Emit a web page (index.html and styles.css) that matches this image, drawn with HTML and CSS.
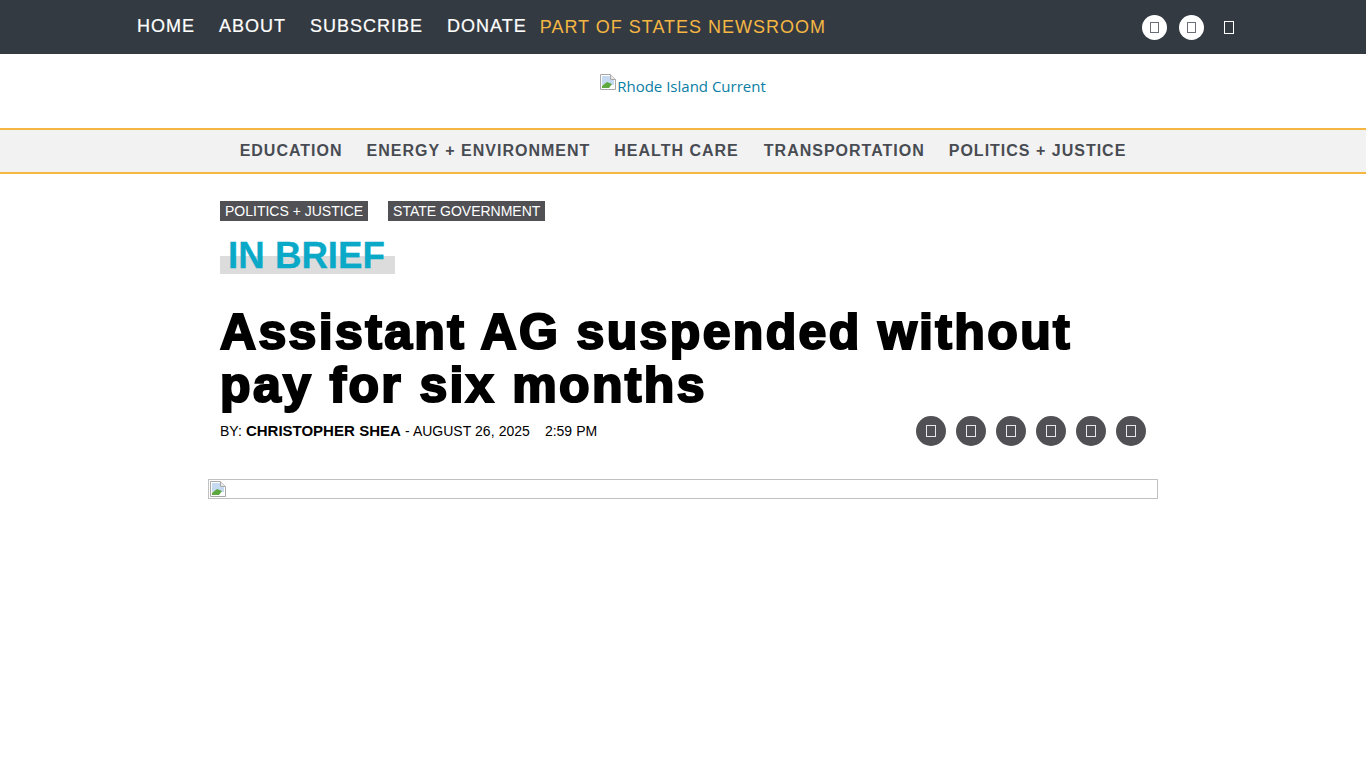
FILE: index.html
```html
<!DOCTYPE html>
<html lang="en">
<head>
<meta charset="utf-8">
<title>Assistant AG suspended without pay for six months</title>
<link rel="stylesheet" href="styles.css">
</head>
<body>
<header class="topbar">
  <nav class="topnav">
    <a>HOME</a><a>ABOUT</a><a>SUBSCRIBE</a><a>DONATE</a>
  </nav>
  <span class="states">PART OF STATES NEWSROOM</span>
  <div class="topicons">
    <span class="circle-white"><span class="tofu-dark"></span></span>
    <span class="circle-white"><span class="tofu-dark"></span></span>
    <span class="search"><span class="tofu-white"></span></span>
  </div>
</header>
<div class="logo">
  <a class="logo-link"><svg class="broken" width="16" height="16" viewBox="0 0 16 16"><path d="M0.5 0.5H10.5L15.5 5.5V15.5H0.5Z" fill="#fff" stroke="#a8a8a8"/><path d="M10.5 0.5V5.5H15.5" fill="#e8e8e8" stroke="#a8a8a8"/><path d="M2 2H10V6H14V11H2Z" fill="#c5d9f1"/><path d="M2 14V12L7 8L12 10L9 14Z" fill="#5da83f"/></svg>Rhode Island Current</a>
</div>
<nav class="mainnav">
  <a>EDUCATION</a><a>ENERGY + ENVIRONMENT</a><a class="health">HEALTH CARE</a><a>TRANSPORTATION</a><a>POLITICS + JUSTICE</a>
</nav>
<main class="article">
  <div class="tags"><span>POLITICS + JUSTICE</span><span>STATE GOVERNMENT</span></div>
  <div class="brief"><span>IN BRIEF</span></div>
  <h1>Assistant AG suspended without pay for six months</h1>
  <div class="meta">
    <p class="byline">BY: <b>CHRISTOPHER SHEA</b> - AUGUST 26, 2025 <span class="time">2:59 PM</span></p>
    <div class="share">
      <span><i></i></span><span><i></i></span><span><i></i></span><span><i></i></span><span><i></i></span><span><i></i></span>
    </div>
  </div>
  <div class="hero"><svg width="16" height="16" viewBox="0 0 16 16"><path d="M0.5 0.5H10.5L15.5 5.5V15.5H0.5Z" fill="#fff" stroke="#a8a8a8"/><path d="M10.5 0.5V5.5H15.5" fill="#e8e8e8" stroke="#a8a8a8"/><path d="M2 2H10V6H14V11H2Z" fill="#c5d9f1"/><path d="M2 14V12L7 8L12 10L9 14Z" fill="#5da83f"/></svg></div>
</main>
</body>
</html>
```
FILE: styles.css
```css
* { box-sizing: border-box; }
html, body { margin: 0; padding: 0; background: #fff; }
body { font-family: "Liberation Sans", Arial, sans-serif; min-height: 768px; overflow: hidden; }
.topbar { height: 54px; background: #343a42; display: flex; align-items: center; padding-left: 137px; padding-right: 125px; }
.topnav { display: flex; gap: 24px; padding-bottom: 2px; }
.topnav a { color: #fff; font-size: 18px; letter-spacing: 1px; -webkit-text-stroke: 0.2px #fff; }
.states { margin-left: 13px; color: #f5b642; font-size: 18px; letter-spacing: 1px; }
.topicons { margin-left: auto; display: flex; align-items: center; gap: 12px; }
.circle-white { width: 25px; height: 25px; border-radius: 50%; background: #fff; display: flex; align-items: center; justify-content: center; }
.tofu-dark { width: 9px; height: 11px; border: 1px solid #6a6e74; }
.search { width: 25px; height: 25px; display: flex; align-items: center; justify-content: center; }
.tofu-white { width: 10px; height: 13px; border: 1px solid #fff; }
.logo { height: 74px; display: flex; justify-content: center; padding-top: 20px; }
.logo-link { font-family: "Open Sans", sans-serif; color: #0a7ea4; font-size: 15px; line-height: 24px; height: 24px; }
.broken { vertical-align: 2px; margin-right: 1px; }
.mainnav { height: 46px; background: #f2f2f2; border-top: 2px solid #f5b642; border-bottom: 2px solid #f5b642; display: flex; justify-content: center; align-items: center; gap: 24px; }
.mainnav a { color: #484c52; font-size: 16px; font-weight: 700; letter-spacing: 1px; }
.mainnav .health { margin-right: 1px; }
.article { width: 950px; margin-left: 208px; }
.tags { display: flex; gap: 20px; padding: 27px 0 0 12px; }
.tags span { background: #505055; color: #fff; font-size: 14px; line-height: 20px; padding: 0 5px; }
.brief { margin: 15px 0 0 12px; }
.brief span { display: inline-block; font-size: 36.7px; font-weight: 700; line-height: 40px; color: #0aa9c8; padding: 0 10px 0 8px; -webkit-text-stroke: 0.3px #0aa9c8; background: linear-gradient(#fff 0 50%, #dcdcdc 50% 95%, #fff 95%); }
h1 { margin: 30px 0 0 12px; font-family: "Liberation Sans", Arial, sans-serif; font-weight: 700; font-size: 50px; line-height: 53px; color: #000; -webkit-text-stroke: 2.2px #000; letter-spacing: 2.35px; width: 900px; }
.meta { display: flex; justify-content: space-between; align-items: center; padding: 0 12px; margin-top: 4px; }
.byline { margin: 0; padding-bottom: 2px; font-size: 14px; color: #000; word-spacing: 0.2px; }
.byline b { font-size: 15px; }
.time { margin-left: 11px; }
.share { display: flex; gap: 10px; }
.share span { width: 30px; height: 30px; border-radius: 50%; background: #505055; display: flex; align-items: center; justify-content: center; }
.share i { width: 10px; height: 12px; border: 1px solid #e8e8e8; display: block; }
.hero { margin-top: 33px; height: 20px; border: 1px solid #c0c0c0; }
.hero svg { display: block; margin: 1px 0 0 1px; }
```
